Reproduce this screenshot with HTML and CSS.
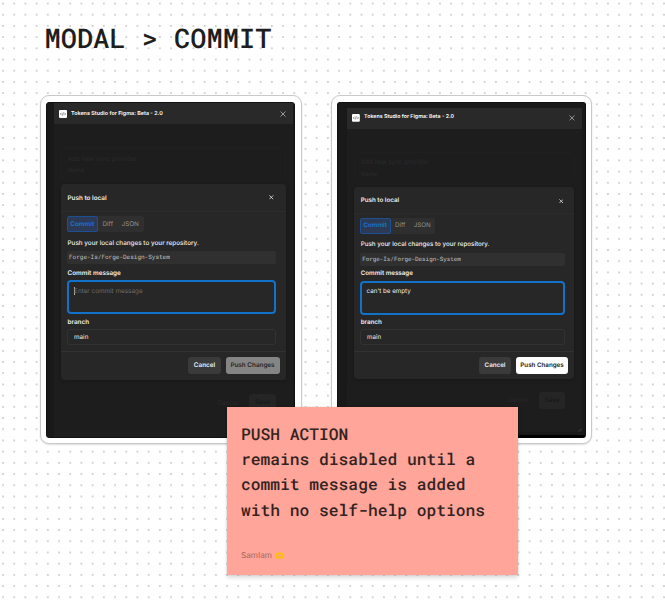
FILE: index.html
```html
<!DOCTYPE html>
<html lang="en">
<head>
<meta charset="utf-8">
<title>Modal &gt; Commit</title>
<link rel="stylesheet" href="styles.css">
</head>
<body>
<main class="board">
  <h1>MODAL &gt; COMMIT</h1>
  <div class="cards">
    <section class="card first">
      <div class="screen"><div class="window">
        <header class="titlebar">
          <svg class="logo" viewBox="0 0 8 8"><rect width="8" height="8" rx="1" fill="#fff"/><path d="M2.5 2.8 1.4 4l1.1 1.2M5.5 2.8 6.6 4 5.5 5.2M4.4 2.5 3.6 5.5" fill="none" stroke="#333" stroke-width=".6"/></svg>
          <strong>Tokens Studio for Figma: Beta - 2.0</strong>
          <svg class="close" viewBox="0 0 6 6"><path d="M.5.5l5 5M5.5.5l-5 5"/></svg>
        </header>
        <div class="backdrop"><p>Add new sync provider</p><p>Name</p></div>
        <div class="ghost-actions"><span>Cancel</span><b>Save</b></div>
        <div class="modal">
          <header class="modal-head"><span>Push to local</span><svg class="close small" viewBox="0 0 6 6"><path d="M.5.5l5 5M5.5.5l-5 5"/></svg></header>
          <div class="modal-body">
            <nav class="tabs"><b>Commit</b><span>Diff</span><span>JSON</span></nav>
            <p class="lead">Push your local changes to your repository.</p>
            <code>Forge-Is/Forge-Design-System</code>
            <label class="message-label">Commit message</label>
            <div class="textarea placeholder"><i class="caret"></i>Enter commit message</div>
            <label class="branch-label">branch</label>
            <div class="input">main</div>
          </div>
          <footer class="actions"><span class="btn cancel">Cancel</span><span class="btn push disabled">Push Changes</span></footer>
        </div>
      </div></div>
    </section>
    <section class="card second">
      <div class="screen"><div class="window">
        <header class="titlebar">
          <svg class="logo" viewBox="0 0 8 8"><rect width="8" height="8" rx="1" fill="#fff"/><path d="M2.5 2.8 1.4 4l1.1 1.2M5.5 2.8 6.6 4 5.5 5.2M4.4 2.5 3.6 5.5" fill="none" stroke="#333" stroke-width=".6"/></svg>
          <strong>Tokens Studio for Figma: Beta - 2.0</strong>
          <svg class="close" viewBox="0 0 6 6"><path d="M.5.5l5 5M5.5.5l-5 5"/></svg>
        </header>
        <div class="backdrop"><p>Add new sync provider</p><p>Name</p></div>
        <div class="ghost-actions"><span>Cancel</span><b>Save</b></div>
        <svg class="grip" viewBox="0 0 4 4"><path d="M.5 3.5l3-3M2.3 3.5l1.2-1.2"/></svg>
        <div class="modal">
          <header class="modal-head"><span>Push to local</span><svg class="close small" viewBox="0 0 6 6"><path d="M.5.5l5 5M5.5.5l-5 5"/></svg></header>
          <div class="modal-body">
            <nav class="tabs"><b>Commit</b><span>Diff</span><span>JSON</span></nav>
            <p class="lead">Push your local changes to your repository.</p>
            <code>Forge-Is/Forge-Design-System</code>
            <label class="message-label">Commit message</label>
            <div class="textarea">can't be empty</div>
            <label class="branch-label">branch</label>
            <div class="input">main</div>
          </div>
          <footer class="actions"><span class="btn cancel">Cancel</span><span class="btn push">Push Changes</span></footer>
        </div>
      </div></div>
    </section>
  </div>
  <aside class="sticky">
    <p>PUSH ACTION<br>remains disabled until a<br>commit message is added<br>with no self-help options</p>
    <footer>SamIam <svg class="hands" viewBox="0 0 9 7"><path d="M.4 6.8C-.1 4.5.1 2 1.8.8 2.8 0 3.8.2 4.5.8 5.2.2 6.2 0 7.2.8 8.9 2 9.1 4.500 8.600 6.800H6.400Q5.800 6.200 4.500 6.200T2.600 6.800z" fill="#fdc00f"/><path d="M2.300 2.700Q3.500 1.700 4.500 2.700 5.500 1.700 6.700 2.700L6.300 4.300Q4.500 5 2.700 4.300z" fill="#ffa599" stroke="#f3ad25" stroke-width=".4"/></svg></footer>
  </aside>
</main>
</body>
</html>
```
FILE: styles.css
```css
* { box-sizing: border-box; }
body { margin: 0; background: #fff; text-rendering: geometricPrecision; }
p { margin: 0; }
svg { display: block; }

.board {
  position: relative;
  width: 665px;
  height: 603px;
  padding: 22px 0 0 39.5px;
  overflow: hidden;
  background-image: radial-gradient(circle at 50% 50%, #c2c2c2 0.55px, transparent 0.95px);
  background-size: 11.21px 11.21px;
  background-position: -2.6px -2.1px;
}
h1 {
  margin: 0 0 0 5px;
  height: 73px;
  font: 500 27px/34px "Roboto Mono", "DejaVu Sans Mono", monospace;
  color: #1e1e1e;
}
.cards { display: flex; gap: 29px; }
.card {
  --u: 1px;
  height: 349px;
  background: #fff;
  border: 1px solid #c9c9c9;
  border-radius: 9px;
  box-shadow: 0 1px 2px #0002;
  font-family: Inter, sans-serif;
  font-size: calc(6.35 * var(--u));
  line-height: calc(8 * var(--u));
  color: #eee;
  white-space: nowrap;
}
.first { width: 262.5px; padding: 6px 6px 6px 5px; }
.second { --u: 0.98px; width: 261px; padding: 6px 5px 6px 5px; }
.screen { height: 336px; background: #191919; border-radius: 3px; border: 1px solid #111; }
.first .screen { padding: 0 1px 0 7px; }
.second .screen { padding: 5px 3px 3px 9px; border-bottom: 3px solid #000; }
.window { position: relative; height: 100%; background: #1d1d1d; }

.titlebar {
  display: flex;
  align-items: center;
  height: calc(21 * var(--u));
  padding: 0 calc(7 * var(--u)) 0 calc(5.5 * var(--u));
  background: #292929;
  font-size: calc(5.42 * var(--u));
}
.logo { width: calc(8 * var(--u)); height: calc(8 * var(--u)); margin-right: calc(4 * var(--u)); }
.titlebar strong { font-weight: 600; color: #fff; }
.close { width: calc(6 * var(--u)); height: calc(6 * var(--u)); margin-left: auto; fill: none; stroke: #bbb; stroke-width: .75; }
.close.small { width: calc(4.6 * var(--u)); height: calc(4.6 * var(--u)); stroke: #eee; stroke-width: 1; }

.backdrop {
  margin: calc(24 * var(--u)) calc(7 * var(--u)) 0;
  padding: calc(6 * var(--u)) calc(6 * var(--u));
  border: 1px solid #1f1f1f;
  border-radius: 3px;
  color: #2b2b2b;
}
.backdrop p + p { margin-top: calc(4 * var(--u)); font-size: calc(6 * var(--u)); }
.ghost-actions {
  position: absolute;
  right: calc(17 * var(--u));
  bottom: calc(26 * var(--u));
  display: flex;
  align-items: center;
  gap: calc(11 * var(--u));
  color: #282828;
}
.second .ghost-actions { bottom: 23px; }
.ghost-actions b {
  width: calc(27 * var(--u));
  line-height: calc(17 * var(--u));
  text-align: center;
  font-weight: 600;
  background: #252525;
  color: #191919;
  border-radius: 3px;
}
.grip { position: absolute; right: 0; bottom: 0; width: 4px; height: 4px; fill: none; stroke: #555; stroke-width: .5; }

.modal {
  position: absolute;
  top: calc(81 * var(--u));
  left: calc(7.5 * var(--u));
  width: calc(224.5 * var(--u));
  height: calc(195.5 * var(--u));
  background: #272727;
  border-radius: 4px;
  box-shadow: 0 1px 4px #0003;
}
.modal-head {
  display: flex;
  align-items: center;
  height: calc(27.5 * var(--u));
  padding: calc(1 * var(--u)) calc(11.5 * var(--u)) 0 calc(6.5 * var(--u));
  border-bottom: 1px solid #2c2c2c;
}
.modal-head span { font-weight: 600; }
.modal-body {
  height: calc(139.5 * var(--u));
  padding: calc(4 * var(--u)) calc(9.5 * var(--u)) 0 calc(5.5 * var(--u));
}
.tabs {
  display: flex;
  width: calc(77 * var(--u));
  height: calc(16 * var(--u));
  background: #2f2f2f;
  border-radius: 2px;
  line-height: calc(16 * var(--u));
  color: #929292;
}
.tabs b {
  width: calc(31.5 * var(--u));
  margin-right: calc(4.5 * var(--u));
  text-align: center;
  line-height: calc(14 * var(--u));
  font-weight: 600;
  color: #1675d2;
  background: #2c3a55;
  border: 1px solid #1d4f93;
  border-radius: 2px;
}
.tabs span + span { margin-left: calc(8.5 * var(--u)); }
.lead { margin: calc(7 * var(--u)) 0 calc(4 * var(--u)) calc(1 * var(--u)); font-weight: 500; }
code {
  display: block;
  height: calc(13.5 * var(--u));
  margin-left: calc(.5 * var(--u));
  padding-left: calc(2 * var(--u));
  border-radius: 2px;
  background: #303030;
  color: #c2c2c2;
  font: calc(6 * var(--u)) / calc(12.5 * var(--u)) "Roboto Mono", "DejaVu Sans Mono", monospace;
}
label { display: block; margin-left: calc(1 * var(--u)); font-weight: 600; }
.message-label { margin-top: calc(4.5 * var(--u)); }
.textarea {
  display: flex;
  height: calc(34 * var(--u));
  margin-top: calc(3.5 * var(--u));
  padding: calc(4.5 * var(--u)) calc(5 * var(--u));
  border: 2px solid #1272c9;
  border-radius: 4px;
}
.placeholder { color: #6b6b6b; }
.caret { width: .6px; height: calc(8 * var(--u)); background: #aaa; }
.branch-label { margin-top: calc(4 * var(--u)); }
.input {
  height: calc(16 * var(--u));
  margin: calc(3 * var(--u)) 0 0 calc(.5 * var(--u));
  padding-left: calc(6 * var(--u));
  border: 1px solid #323232;
  border-radius: 3px;
  line-height: calc(14.5 * var(--u));
}
.actions {
  display: flex;
  justify-content: flex-end;
  gap: calc(4.5 * var(--u));
  padding: calc(5 * var(--u)) calc(6 * var(--u)) 0 0;
  border-top: 1px solid #323232;
}
.btn {
  height: calc(17 * var(--u));
  line-height: calc(17 * var(--u));
  text-align: center;
  border-radius: 3px;
  font-weight: 600;
}
.cancel { width: calc(33 * var(--u)); background: #3a3a3a; }
.push { width: calc(54 * var(--u)); background: #fff; color: #222; }
.disabled { background: #858585; color: #272727; }

.sticky {
  position: absolute;
  left: 227px;
  top: 407px;
  width: 291px;
  height: 168px;
  padding: 15px 14px 0;
  display: flex;
  flex-direction: column;
  background: #ffa599;
  box-shadow: 0 3px 4px #0002, 0 0 1px #0004;
  color: #332321;
  font: 500 16.27px/25.2px "Roboto Mono", "DejaVu Sans Mono", monospace;
  white-space: nowrap;
}
.sticky footer {
  display: flex;
  align-items: center;
  gap: 3px;
  margin-top: 26.5px;
  font: 8.2px/12px Inter, sans-serif;
  color: #a7655d;
}
.hands { width: 9px; height: 7px; }
```
